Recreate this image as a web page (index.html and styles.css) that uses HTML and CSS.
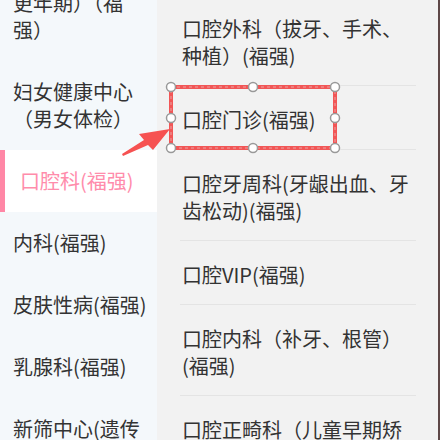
FILE: index.html
```html
<!DOCTYPE html>
<html lang="zh-CN">

<head>
    <meta charset="UTF-8">
    <meta name="viewport" content="width=device-width, initial-scale=1.0">
    <title>科室选择</title>
    <link rel="stylesheet" href="styles.css">
</head>

<body>
    <div class="page">
        <ul class="dept-list">
            <li class="dept">更年期）（福强）</li>
            <li class="dept">妇女健康中心（男女体检）</li>
            <li class="dept active">口腔科(福强)</li>
            <li class="dept">内科(福强)</li>
            <li class="dept">皮肤性病(福强)</li>
            <li class="dept">乳腺科(福强)</li>
            <li class="dept">新筛中心(遗传代谢)</li>
        </ul>
        <ul class="sub-list">
            <li class="sub">口腔外科（拔牙、手术、种植）(福强)</li>
            <li class="sub">口腔门诊(福强)</li>
            <li class="sub">口腔牙周科(牙龈出血、牙齿松动)(福强)</li>
            <li class="sub">口腔VIP(福强)</li>
            <li class="sub">口腔内科（补牙、根管）(福强)</li>
            <li class="sub">口腔正畸科（儿童早期矫治）(福强)</li>
        </ul>

        <!-- annotation drawn over the screenshot -->
        <svg class="markup" width="440" height="440" viewBox="0 0 440 440">
            <polygon class="arrow" points="122,154 144,140 139,134 170,129 153,150 148,145 123,156" />
            <rect class="sel" x="171" y="87" width="164" height="61" />
            <rect class="sel-dash" x="171" y="87" width="164" height="61" />
            <circle class="handle" cx="171" cy="87" r="4.5" />
            <circle class="handle" cx="253" cy="87" r="4.5" />
            <circle class="handle" cx="335" cy="87" r="4.5" />
            <circle class="handle" cx="171" cy="118" r="4.5" />
            <circle class="handle" cx="335" cy="118" r="4.5" />
            <circle class="handle" cx="171" cy="148" r="4.5" />
            <circle class="handle" cx="253" cy="148" r="4.5" />
            <circle class="handle" cx="335" cy="148" r="4.5" />
        </svg>
    </div>
</body>

</html>
```

FILE: styles.css
```css
* {
    margin: 0;
    padding: 0;
    box-sizing: border-box;
}

body {
    font-family: 'Noto Sans CJK SC', 'Noto Sans', sans-serif;
    color: #333;
    background-color: #f2f2f2;
}

.page {
    position: relative;
    display: flex;
    width: 440px;
    height: 440px;
    overflow: hidden;
    border-right: 2px solid #5e4848;
}

ul {
    list-style: none;
}

.dept-list {
    width: 157px;
    flex-shrink: 0;
    margin-top: -28px;
    background-color: #f4f8fb;
}

.dept {
    padding: 17px 6px 18px 13px;
    font-size: 20px;
    line-height: 27px;
}

.dept.active {
    background-color: #fff;
    color: #ff8cab;
    border-left: 5px solid #ff87a6;
    padding-left: 15px;
}

.sub-list {
    flex: 1;
    margin: -5px 22px 0 23px;
}

.sub {
    padding: 20px 2px 16px;
    font-size: 20px;
    line-height: 27px;
    border-bottom: 1px solid #e4e4e4;
}

.markup {
    position: absolute;
    left: 0;
    top: 0;
}

.arrow {
    fill: #f65252;
}

.sel {
    fill: none;
    stroke: #f25656;
    stroke-width: 4;
}

.sel-dash {
    fill: none;
    stroke: #e9a4a4;
    stroke-width: 1;
    stroke-dasharray: 3 3;
}

.handle {
    fill: #fff;
    stroke: #999;
    stroke-width: 1.5;
}
```
